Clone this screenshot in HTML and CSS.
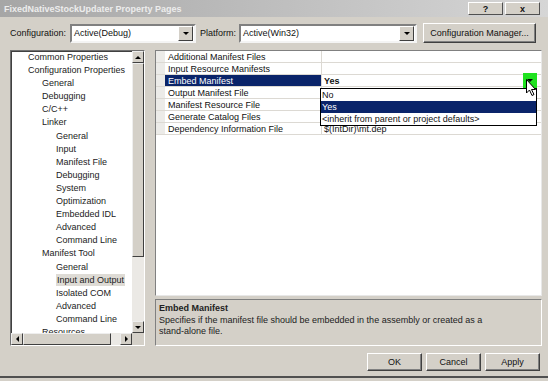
FILE: index.html
```html
<!DOCTYPE html>
<html lang="en">
<head>
    <meta charset="UTF-8">
    <title>FixedNativeStockUpdater Property Pages</title>
    <link rel="stylesheet" href="styles.css">
</head>
<body>
    <div class="window">
        <div class="titlebar">
            <span class="title">FixedNativeStockUpdater Property Pages</span>
            <div class="caption-buttons">
                <span class="cap-btn">?</span>
                <span class="cap-btn">x</span>
            </div>
        </div>

        <div class="config-row">
            <span class="label">Configuration:</span>
            <div class="combo combo-config">
                <span class="combo-text">Active(Debug)</span>
                <span class="combo-btn"><i class="tri-down"></i></span>
            </div>
            <span class="label label-platform">Platform:</span>
            <div class="combo combo-platform">
                <span class="combo-text">Active(Win32)</span>
                <span class="combo-btn"><i class="tri-down"></i></span>
            </div>
            <span class="btn btn-manager">Configuration Manager...</span>
        </div>

        <div class="main">
            <div class="tree">
                <div class="tree-top">
                    <ul class="tree-list">
                        <li class="lvl0">Common Properties</li>
                        <li class="lvl0">Configuration Properties</li>
                        <li class="lvl1">General</li>
                        <li class="lvl1">Debugging</li>
                        <li class="lvl1">C/C++</li>
                        <li class="lvl1">Linker</li>
                        <li class="lvl2">General</li>
                        <li class="lvl2">Input</li>
                        <li class="lvl2">Manifest File</li>
                        <li class="lvl2">Debugging</li>
                        <li class="lvl2">System</li>
                        <li class="lvl2">Optimization</li>
                        <li class="lvl2">Embedded IDL</li>
                        <li class="lvl2">Advanced</li>
                        <li class="lvl2">Command Line</li>
                        <li class="lvl1">Manifest Tool</li>
                        <li class="lvl2">General</li>
                        <li class="lvl2"><span class="current">Input and Output</span></li>
                        <li class="lvl2">Isolated COM</li>
                        <li class="lvl2">Advanced</li>
                        <li class="lvl2">Command Line</li>
                        <li class="lvl1">Resources</li>
                    </ul>
                    <div class="vscroll">
                        <span class="sb-btn"><i class="tri-up"></i></span>
                        <span class="sb-thumb v-thumb"></span>
                        <span class="sb-track"></span>
                        <span class="sb-btn"><i class="tri-down"></i></span>
                    </div>
                </div>
                <div class="hscroll">
                    <span class="sb-btn"><i class="tri-left"></i></span>
                    <span class="sb-thumb h-thumb"></span>
                    <span class="sb-track"></span>
                    <span class="sb-btn"><i class="tri-right"></i></span>
                    <span class="sb-corner"></span>
                </div>
            </div>

            <div class="right">
                <div class="grid">
                    <div class="row"><span class="gutter"></span><span class="name">Additional Manifest Files</span><span class="value"></span></div>
                    <div class="row"><span class="gutter"></span><span class="name">Input Resource Manifests</span><span class="value"></span></div>
                    <div class="row row-selected"><span class="gutter"></span><span class="name">Embed Manifest</span><span class="value"><b>Yes</b><span class="drop-btn"><i class="tri-down"></i></span></span></div>
                    <div class="row"><span class="gutter"></span><span class="name">Output Manifest File</span><span class="value"></span></div>
                    <div class="row"><span class="gutter"></span><span class="name">Manifest Resource File</span><span class="value"></span></div>
                    <div class="row"><span class="gutter"></span><span class="name">Generate Catalog Files</span><span class="value"></span></div>
                    <div class="row"><span class="gutter"></span><span class="name">Dependency Information File</span><span class="value">$(IntDir)\mt.dep</span></div>

                    <ul class="dropdown">
                        <li>No</li>
                        <li class="picked">Yes</li>
                        <li>&lt;inherit from parent or project defaults&gt;</li>
                    </ul>

                    <svg class="cursor" width="11" height="18" viewBox="0 0 11 18">
                        <path d="M0.5 0.5 L0.5 14 L3.5 11 L6 16.5 L8 15.5 L5.5 10.5 L9.5 10.5 Z" fill="#fff" stroke="#000" stroke-width="1"/>
                    </svg>
                </div>

                <div class="desc">
                    <div class="desc-title">Embed Manifest</div>
                    <p>Specifies if the manifest file should be embedded in the assembly or created as a stand-alone file.</p>
                </div>
            </div>
        </div>

        <div class="footer">
            <span class="btn btn-ok">OK</span>
            <span class="btn btn-cancel">Cancel</span>
            <span class="btn btn-apply">Apply</span>
        </div>
    </div>
</body>
</html>
```

FILE: styles.css
```css
body {
    margin: 0;
    background-color: #d4d0c8;
    font-family: "Liberation Sans", Arial, sans-serif;
    font-size: 9px;
    color: #111;
}

.window {
    width: 548px;
    height: 378px;
    box-sizing: border-box;
    border-bottom: 2px solid #505050;
    overflow: hidden;
}

/* title bar (inactive) */
.titlebar {
    height: 17px;
    display: flex;
    align-items: center;
    justify-content: space-between;
    padding: 0 8px 0 4px;
    background: linear-gradient(to right, #a6a6a6, #d6d6d6);
}

.title {
    color: #ededed;
    font-weight: bold;
    font-size: 9px;
}

.caption-buttons {
    display: flex;
    gap: 2px;
}

.cap-btn {
    width: 35px;
    height: 13px;
    box-sizing: border-box;
    display: flex;
    align-items: center;
    justify-content: center;
    font-weight: bold;
    background-color: #d4d0c8;
    border: 1px solid;
    border-color: #fff #505050 #505050 #fff;
}

/* configuration row */
.config-row {
    display: flex;
    align-items: center;
    height: 20px;
    margin-top: 6px;
    padding-left: 10px;
}

.label {
    margin-right: 4px;
}

.label-platform {
    margin-left: 4px;
    margin-right: 3px;
}

.combo {
    height: 19px;
    box-sizing: border-box;
    display: flex;
    align-items: center;
    background-color: #fff;
    border: 2px solid;
    border-color: #808080 #f4f4f4 #f4f4f4 #808080;
}

.combo-config {
    width: 126px;
}

.combo-platform {
    width: 178px;
}

.combo-text {
    flex: 1;
    padding-left: 2px;
}

.combo-btn {
    width: 13px;
    height: 13px;
    display: flex;
    align-items: center;
    justify-content: center;
    margin-right: 1px;
    background-color: #d4d0c8;
    border: 1px solid;
    border-color: #fff #404040 #404040 #fff;
}

.btn {
    height: 20px;
    box-sizing: border-box;
    display: flex;
    align-items: center;
    justify-content: center;
    background-color: #d4d0c8;
    border: 1px solid;
    border-color: #fff #404040 #404040 #fff;
    box-shadow: inset -1px -1px #808080;
}

.btn-manager {
    width: 113px;
    margin-left: 6px;
}

/* small arrows */
.tri-down, .tri-up, .tri-left, .tri-right {
    display: block;
    width: 0;
    height: 0;
}

.tri-down {
    border-left: 3px solid transparent;
    border-right: 3px solid transparent;
    border-top: 3px solid #000;
}

.tri-up {
    border-left: 3px solid transparent;
    border-right: 3px solid transparent;
    border-bottom: 3px solid #000;
}

.tri-left {
    border-top: 3px solid transparent;
    border-bottom: 3px solid transparent;
    border-right: 3px solid #000;
}

.tri-right {
    border-top: 3px solid transparent;
    border-bottom: 3px solid transparent;
    border-left: 3px solid #000;
}

/* main area */
.main {
    display: flex;
    margin-top: 7px;
    padding-left: 10px;
}

.tree {
    width: 135px;
    height: 296px;
    box-sizing: border-box;
    display: flex;
    flex-direction: column;
    background-color: #fff;
    border: 1px solid;
    border-color: #707070 #fff #fff #707070;
    box-shadow: inset 1px 1px #404040;
}

.tree-top {
    flex: 1;
    display: flex;
    min-height: 0;
}

.tree-list {
    flex: 1;
    margin: 0;
    padding: 0;
    list-style: none;
    overflow: hidden;
    line-height: 13.1px;
    color: #222;
}

.lvl0 { padding-left: 17px; }
.lvl1 { padding-left: 31px; }
.lvl2 { padding-left: 45px; }

.current {
    background-color: #dedbd5;
    padding: 1px 1px;
}

.vscroll {
    width: 12px;
    display: flex;
    flex-direction: column;
}

.sb-btn {
    width: 12px;
    height: 12px;
    box-sizing: border-box;
    flex-shrink: 0;
    display: flex;
    align-items: center;
    justify-content: center;
    background-color: #d4d0c8;
    border: 1px solid;
    border-color: #eee #404040 #404040 #eee;
}

.sb-thumb {
    box-sizing: border-box;
    background-color: #d4d0c8;
    border: 1px solid;
    border-color: #eee #404040 #404040 #eee;
}

.v-thumb {
    height: 194px;
}

.sb-track {
    flex: 1;
    background-color: #ebe9e5;
}

.hscroll {
    height: 12px;
    display: flex;
}

.h-thumb {
    width: 88px;
}

.sb-corner {
    width: 12px;
    background-color: #d4d0c8;
}

.right {
    margin-left: 10px;
    width: 387px;
    display: flex;
    flex-direction: column;
    gap: 3px;
}

/* property grid */
.grid {
    position: relative;
    height: 246px;
    box-sizing: border-box;
    background-color: #fff;
    border: 1px solid;
    border-color: #808080 #e8e8e8 #e8e8e8 #808080;
}

.row {
    display: flex;
    height: 12px;
    box-sizing: border-box;
    border-bottom: 1px solid #dcd9d3;
    line-height: 12px;
}

.gutter {
    width: 9px;
    background-color: #ecebe8;
}

.name {
    width: 157px;
    padding-left: 3px;
    box-sizing: border-box;
    border-right: 1px solid #dcd9d3;
}

.value {
    flex: 1;
    display: flex;
    padding-left: 2px;
}

.value b {
    flex: 1;
}

.row-selected .name {
    background-color: #0a246a;
    color: #fff;
}

.drop-btn {
    width: 14px;
    height: 15px;
    margin: -2px 4px 0 0;
    display: flex;
    align-items: center;
    justify-content: center;
    background-color: #1fe21f;
}

.dropdown {
    position: absolute;
    left: 164px;
    top: 37px;
    width: 217px;
    margin: 0;
    padding: 0;
    list-style: none;
    box-sizing: border-box;
    background-color: #fff;
    border: 1px solid #000;
    line-height: 12px;
}

.dropdown li {
    padding-left: 1px;
}

.dropdown .picked {
    background-color: #0a246a;
    color: #fff;
}

.cursor {
    position: absolute;
    left: 370px;
    top: 28px;
}

/* description */
.desc {
    height: 47px;
    box-sizing: border-box;
    padding: 3px 3px;
    border: 1px solid;
    border-color: #808080 #fff #fff #808080;
    line-height: 11.5px;
    color: #222;
}

.desc-title {
    font-weight: bold;
}

.desc p {
    margin: 0;
    width: 330px;
}

/* bottom buttons */
.footer {
    display: flex;
    justify-content: flex-end;
    gap: 4px;
    margin-top: 7px;
    padding-right: 8px;
}

.btn-ok, .btn-cancel, .btn-apply {
    width: 55px;
    height: 18px;
}
```
